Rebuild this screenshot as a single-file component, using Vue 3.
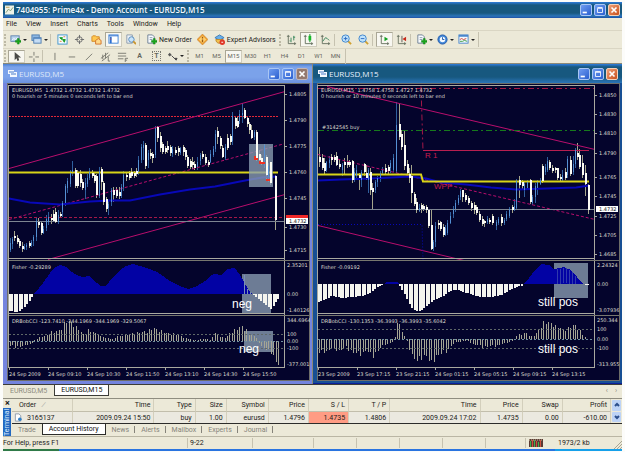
<script setup>
const menus = ['File', 'View', 'Insert', 'Charts', 'Tools', 'Window', 'Help']

const plus = '<path d="M8 5h2v2h2v2h-2v2H8V9H6V7h2z" fill="#18a818" stroke="#0a7a14" stroke-width=".5"/>'
const axes = '<path d="M2.500 1v9.500H11M1 2.500h3M9.500 9v3" fill="none" stroke="#66705f"/>'
const sheet = '<path d="M2 1h5l2 2v7H2z" fill="#f8fbff" stroke="#6b7d92"/><path d="M4 4h3M4 6h3" stroke="#8898aa"/>'

const toolbar = [
  { kind: 'grip' },
  { kind: 'drop', name: 'New chart', art: '<rect x="1" y="2" width="9" height="6" fill="#b9d3ee" stroke="#5f83ae"/><path d="M2 7l2-2 2 1 2-2" stroke="#fff" fill="none"/>' + plus },
  { kind: 'drop', name: 'Profiles', art: '<rect x="1" y="1" width="8" height="6" fill="#8db8e4" stroke="#4f7db0"/><rect x="3" y="4" width="8" height="6" fill="#c5ddf5" stroke="#4f7db0"/><path d="M3 5h8" stroke="#5488c4"/>' },
  { kind: 'sep' },
  { kind: 'icon', name: 'Market watch', art: '<rect x="1" y="1" width="10" height="10" fill="#f4faff" stroke="#3f94cc"/><path d="M3 4h3l-1 2zM6 6l3 0-1 3z" fill="#159a20" stroke="#159a20"/><path d="M7 3h2M3 8h2" stroke="#e08030"/>' },
  { kind: 'icon', name: 'Data window', art: '<circle cx="6" cy="6" r="3" fill="none" stroke="#68696a"/><path d="M6 1v4M6 7v4M1 6h4M7 6h4" stroke="#68696a"/>' },
  { kind: 'icon', name: 'Navigator', art: '<path d="M1 3l1-1h3l1 1h3v5H1z" fill="#ffc850" stroke="#d28a26"/><path d="M5 7l3-2 3 2v4H5z" fill="#ffd98a" stroke="#d2742a"/>' },
  { kind: 'icon', name: 'Terminal', on: true, art: '<rect x="1" y="1" width="10" height="9" fill="#fff" stroke="#3b82d8"/><path d="M1 2h10" stroke="#2d6ed0" stroke-width="1"/><path d="M3 3v7" stroke="#2d6ed0" stroke-width="2"/><path d="M3 5v1" stroke="#f04030"/>' },
  { kind: 'icon', name: 'Strategy tester', art: '<path d="M2 1h6v9H2z" fill="#eef4fa" stroke="#8b9aab"/><circle cx="7" cy="6" r="3" fill="#c8e4fa" stroke="#5588b8"/><path d="M9 8l3 3" stroke="#c89530" stroke-width="2"/>' },
  { kind: 'sep' },
  { kind: 'text', name: 'New Order', art: sheet + plus },
  { kind: 'icon', name: 'MetaEditor', art: '<path d="M6 0l6 6-6 6-6-6z" fill="#f0a030" stroke="#b87020" stroke-width=".5"/><path d="M6 2l4 4-4 4-4-4z" fill="#ffd070"/><path d="M6 3v2M6 6v3" stroke="#9a5a10" stroke-width="1.500"/>' },
  { kind: 'text', name: 'Expert Advisors', art: '<path d="M1 4l5-3 5 3-5 3z" fill="#6ab0e8" stroke="#3a78b8"/><path d="M2 6c0 5 7 6 8 0z" fill="#f0c050" stroke="#c08a28"/><circle cx="9" cy="9" r="3" fill="#e03828"/><path d="M8 9h2" stroke="#fff"/>' },
  { kind: 'grip' },
  { kind: 'icon', name: 'Bar chart', art: axes + '<path d="M5.500 4v5M5 7.500h-1M8.500 2v5M8 3.500h2" stroke="#34865a" fill="none"/>' },
  { kind: 'icon', name: 'Candlesticks', on: true, art: axes + '<path d="M7.500 0v9" stroke="#0b8a1a"/><rect x="6" y="2" width="3" height="5" fill="#19b82a"/>' },
  { kind: 'icon', name: 'Line chart', art: axes + '<path d="M3 8l3-4 2 1 2 2" stroke="#34865a" fill="none"/>' },
  { kind: 'sep' },
  { kind: 'icon', name: 'Zoom in', art: '<path d="M7 7l4 4" stroke="#d0a030" stroke-width="2"/><circle cx="5" cy="5" r="4" fill="#bfe2fb" stroke="#3a82cc"/><path d="M3 5h4M5 3v4" stroke="#2868c0"/>' },
  { kind: 'icon', name: 'Zoom out', art: '<path d="M7 7l4 4" stroke="#d0a030" stroke-width="2"/><circle cx="5" cy="5" r="4" fill="#bfe2fb" stroke="#3a82cc"/><path d="M3 5h4" stroke="#2868c0"/>' },
  { kind: 'sep' },
  { kind: 'icon', name: 'Auto scroll', on: true, art: axes + '<path d="M6 3l4 2.500L6 8z" fill="#12a020"/>' },
  { kind: 'icon', name: 'Chart shift', art: axes + '<path d="M6.500 2v7" stroke="#5a5a5a"/><path d="M11 3L7 5.500 11 8z" fill="#c82818"/>' },
  { kind: 'sep' },
  { kind: 'drop', name: 'Indicators', art: sheet + plus },
  { kind: 'drop', name: 'Periods', art: '<circle cx="6" cy="6" r="5" fill="#3f86d8" stroke="#2058a8"/><circle cx="6" cy="6" r="3" fill="#f2f8ff"/><path d="M6 3.500V6h2" stroke="#2058a8" fill="none"/>' },
  { kind: 'drop', name: 'Templates', art: '<rect x="1" y="1" width="10" height="9" fill="#f4f9ff" stroke="#4a86cc"/><path d="M1 2h10" stroke="#4a86cc" stroke-width="2"/><path d="M2 6l2-1 2 1 3-1" stroke="#d04030" fill="none"/><path d="M2 8l3 0 2-1 3 1" stroke="#3a9a40" fill="none"/>' },
  { kind: 'end' },
]

const g = '#77776f'
const drawing = [
  { kind: 'grip' },
  { kind: 'icon', name: 'Cursor', on: true, art: '<path d="M4 1v9l2-2 1 3 2-1-1-3h3z" fill="#4a4a48"/>' },
  { kind: 'icon', name: 'Crosshair', art: `<path d="M6.500 1v4M6.500 8v4M1 6.500h4M8 6.500h4" stroke="${g}"/>` },
  { kind: 'sep' },
  { kind: 'icon', name: 'Vertical line', art: `<path d="M6.500 2v8" stroke="${g}"/>` },
  { kind: 'icon', name: 'Horizontal line', art: `<path d="M3 6.500h7" stroke="${g}"/>` },
  { kind: 'icon', name: 'Trendline', art: `<path d="M3 10l7-7" stroke="${g}"/>` },
  { kind: 'icon', name: 'Channel', art: `<path d="M1 8l8-6M2 11l9-7M3 4v5M6 2v6M9 6v5M9 11h2" stroke="${g}" fill="none"/>` },
  { kind: 'icon', name: 'Fibonacci', art: `<path d="M1 2.500h9M1 5.500h9M1 8.500h6M9 12V8h3M9 10h2" stroke="${g}" fill="none"/>` },
  { kind: 'icon', name: 'Text', glyph: 'A' },
  { kind: 'icon', name: 'Label', glyph: 'T', boxed: true },
  { kind: 'drop', name: 'Arrows', art: '<path d="M1 4l2-2 2 2-2 2z" fill="#555"/><path d="M8 8h3l-1 2zM5 5l3 3" fill="#444" stroke="#444"/>' },
  { kind: 'grip' },
]
const frames = ['M1', 'M5', 'M15', 'M30', 'H1', 'H4', 'D1', 'W1', 'MN']

/* Each candle: x, high, body top, body bottom, low, direction */
const parse = (s) => s.trim().split(/\s+/).map((t) => {
  const [x, hi, top, bot, lo, up] = t.split(',')
  return { x: +x, hi: +hi, top: +top, bot: +bot, lo: +lo, up: up === 'u' }
})

/* Histogram columns, interpolated between key points */
const columns = (pts, from, to, step) => {
  const out = []
  for (let x = from; x <= to; x += step) {
    const i = Math.max(1, pts.findIndex((p) => p[0] >= x))
    const [x0, y0] = pts[i - 1]
    const [x1, y1] = pts[i]
    const y = y0 + ((y1 - y0) * (Math.min(Math.max(x, x0), x1) - x0)) / (x1 - x0)
    out.push({ x: Math.round(x), y: Math.round(y) })
  }
  return out
}
const wobble = (cols, zero) => cols.map((c, i) => ({ x: c.x, y: Math.round(zero + (c.y - zero) * [1, 0.8, 1.1, 0.9, 1][i % 5]) }))

const STEP = 39 / 16

const charts = [
  {
    title: 'EURUSD,M5', active: false, ox: 7, left: 9, axis: 285, end: 278,
    head: 'EURUSD,M5  1.4732 1.4732 1.4732 1.4732',
    note: '0 hourish or 5 minutes 0 seconds left to bar end',
    candles: parse(`10,238,243,250,252,u 12,237,239,244,249,u 14,231,236,238,241,d 17,235,238,242,244,d 19,239,241,246,248,d 22,242,246,249,252,d 24,244,247,249,250,u 26,243,245,247,250,u 29,241,243,246,248,d 31,240,242,245,247,u 33,235,237,241,246,u 36,218,221,237,241,u 38,218,222,225,228,d 41,221,223,233,235,d 43,226,229,233,234,u 46,215,219,228,231,u 48,212,217,222,225,u 51,214,218,220,224,d 53,210,214,221,222,d 55,208,212,222,223,d 58,210,215,222,224,u 60,212,214,216,218,d 62,201,203,212,217,u 65,184,186,203,206,u 67,178,181,188,193,u 70,170,173,184,187,u 72,161,170,172,176,u 75,168,170,186,188,d 77,170,173,186,188,d 80,170,174,183,187,d 82,179,182,188,190,d 85,178,183,190,199,u 87,174,178,184,187,u 89,168,172,178,180,u 92,170,173,176,178,d 94,173,175,181,183,d 96,174,176,195,198,d 99,167,171,196,198,u 101,167,169,182,190,d 103,181,183,202,205,d 106,197,199,209,212,d 108,201,204,208,215,u 111,188,190,202,206,u 113,187,190,195,202,d 116,187,190,196,198,d 119,187,192,196,199,d 121,184,187,196,198,u 123,171,175,187,191,u 126,172,175,177,181,d 129,171,173,178,180,d 131,168,172,176,178,d 134,171,173,176,178,d 136,168,171,174,177,d 138,156,160,172,175,u 141,144,147,160,163,u 143,141,145,148,160,u 145,143,145,166,169,d 148,150,153,160,168,u 150,149,153,156,159,d 152,152,154,158,163,d 155,126,128,155,158,u 157,126,127,138,142,d 160,132,136,148,152,d 162,142,144,152,154,d 165,146,148,152,154,d 167,141,146,150,153,d 170,145,147,153,156,d 172,146,149,154,157,u 175,147,150,153,155,d 178,146,148,152,156,d 180,147,148,153,155,u 183,145,147,152,156,d 185,148,150,157,160,d 187,155,157,166,168,d 190,159,161,167,169,d 192,157,162,165,169,d 194,161,164,168,170,d 197,157,162,167,170,u 200,153,155,161,165,u 202,151,154,157,159,d 205,154,157,163,165,d 208,160,162,165,167,d 210,150,154,162,163,u 213,146,149,155,157,u 215,130,134,149,152,u 217,127,131,137,144,d 220,136,138,146,149,d 222,145,148,157,158,d 225,144,147,158,160,u 227,134,138,148,150,d 230,134,136,142,145,d 232,112,116,141,145,u 235,116,118,126,129,d 237,117,121,127,128,d 239,110,114,121,124,u 242,103,113,115,123,u 244,108,110,118,119,d 247,116,118,124,127,d 249,122,124,130,134,d 251,125,130,138,139,d 254,130,132,137,140,u 256,130,132,158,161,d 259,150,154,160,163,d 261,155,158,162,165,d 264,144,145,166,168,u 266,155,157,175,180,d 268,163,166,177,182,u 270,162,162,183,185,d 275,175,176,220,230,d`),
    lines: [
      ['9,116 278,116', 'red'], ['9,168 285,91', 'mag'], ['48,259 285,194', 'mag'], ['9,219 285,143', 'mag dash'],
      ['9,172 278,172', 'yellow'], ['9,217 285,217', 'crimson dash'], ['9,221 285,221', 'grey'],
      ['9,198 30,202 60,204 90,201 110,200 130,200 160,194 190,189 215,186 240,181 262,177 277,176', 'blue'],
    ],
    marks: ['255,156 255,159 258,159', '260,161 260,163 265,163', '266,180 270,180'],
    boxes: [[249, 144, 24, 43], [242, 274, 29, 40], [244, 331, 29, 21]],
    big: [['neg', 232, 308], ['neg', 239, 353]],
    tags: [],
    prices: [['1.4805', 94], ['1.4790', 120], ['1.4775', 146], ['1.4760', 172], ['1.4745', 198], ['1.4730', 227], ['1.4715', 250]],
    last: 218, ask: true, zero: 294, cciZero: 341, levels: [334, 348],
    area: '34,294 39,288 43,283 48,276 52,270 56,267 60,265 66,267 72,272 75,274 82,277 89,276 97,283 101,286 106,286 113,277 120,270 126,266 133,264 140,266 150,269 157,272 163,276 170,281 180,286 188,289 197,286 205,281 211,275 215,274 221,275 227,269 235,268 240,275 244,282 248,289 252,294',
    neg: [...columns([[9, 311], [18, 312], [25, 306], [32, 295]], 9, 32, STEP), ...columns([[253, 295], [260, 301], [270, 309], [279, 297]], 253, 279, STEP)],
    cci: wobble([...columns([[9, 346], [20, 347], [27, 345], [33, 342], [36, 338], [45, 336], [52, 332], [58, 331], [62, 326], [67, 320], [73, 323], [77, 328], [83, 334], [88, 330], [95, 333], [105, 338], [112, 339], [118, 336], [128, 334], [135, 333], [145, 331], [155, 328], [165, 333], [175, 334], [185, 338], [195, 340], [205, 339], [210, 340], [215, 333], [220, 336], [225, 338], [230, 332], [238, 328], [242, 326], [245, 329], [250, 334], [256, 337], [259, 344], [265, 349], [270, 352], [273, 356], [276, 363], [279, 366]], 10, 279, STEP)], 341),
    fisher: 'Fisher -0.29289', cciText: 'DRBobCCI -123.7410 -344.1969 -344.1969 -329.5067',
    scale: [['2.35201', 265], ['0.00', 294], ['-1.40126', 310], ['344.6964', 320], ['100', 334], ['0.00', 341], ['-100', 348], ['-377.001', 364]],
    times: ['24 Sep 2009', '24 Sep 09:10', '24 Sep 10:30', '24 Sep 11:50', '24 Sep 13:10', '24 Sep 14:30', '24 Sep 15:50'],
  },
  {
    title: 'EURUSD,M15', active: true, ox: 316, left: 317, axis: 594, end: 588,
    head: 'EURUSD,M15  1.4758 1.4758 1.4727 1.4732',
    note: '0 hourish or 10 minutes 0 seconds left to bar end',
    candles: parse(`318,147,157,162,167,d 321,154,158,168,170,d 323,158,163,171,174,d 325,161,162,170,172,u 328,156,160,163,168,u 330,154,157,160,165,d 333,155,157,160,162,d 335,152,156,165,166,d 338,160,164,167,169,d 341,163,165,170,176,u 343,158,162,165,174,d 346,155,162,165,168,d 348,160,162,165,167,d 351,160,161,180,183,d 353,168,172,180,182,u 355,165,170,176,180,u 358,173,175,178,190,d 360,170,172,180,187,u 363,163,164,172,176,d 365,165,173,178,180,d 367,168,170,180,193,u 369,168,172,190,195,d 371,183,188,192,210,d 374,180,182,190,193,u 376,176,178,182,187,u 379,171,174,178,182,u 381,167,170,173,175,u 384,164,168,172,174,d 387,165,167,171,174,d 389,160,163,168,173,u 392,154,158,170,172,u 395,102,125,171,173,u 398,103,124,137,140,d 400,130,134,147,150,d 403,131,145,166,170,d 406,160,164,173,177,d 408,168,174,178,183,d 410,165,176,193,203,d 413,192,194,204,206,d 415,198,202,210,213,d 418,204,208,211,212,u 420,203,205,209,213,d 422,204,206,209,211,d 425,205,207,210,213,d 427,209,210,226,228,d 430,210,225,249,250,d 432,240,242,248,251,u 434,222,226,242,247,u 437,220,223,225,229,d 439,221,222,229,231,d 442,224,227,235,237,d 444,225,228,235,236,u 446,220,223,233,235,u 449,212,216,223,224,u 452,206,209,214,218,u 454,200,203,209,212,u 457,195,198,203,205,u 459,189,191,197,200,u 461,190,190,197,202,d 464,193,195,200,202,d 467,196,198,203,205,d 470,201,203,208,211,d 473,202,205,210,214,d 475,205,207,213,215,d 478,211,214,220,222,d 481,216,219,224,226,d 483,220,221,223,227,d 486,216,219,222,224,u 488,218,220,222,224,d 491,214,216,223,225,d 495,220,222,226,230,u 497,217,219,223,225,u 500,214,217,223,226,d 503,218,220,223,225,u 505,211,214,219,221,u 508,207,209,216,218,u 511,205,207,210,213,d 513,199,206,210,211,u 515,179,181,208,210,u 518,176,180,185,198,d 521,180,182,186,190,d 523,182,184,190,197,u 526,180,182,188,190,u 529,179,180,202,204,d 531,195,197,203,205,u 534,183,186,197,203,u 536,180,182,188,195,u 539,178,180,184,185,u 541,164,166,181,183,d 544,164,167,172,175,u 546,157,161,170,172,u 548,160,162,168,170,d 551,165,168,171,173,d 554,167,168,170,173,d 556,168,168,178,180,d 559,174,177,179,181,d 561,170,175,180,182,u 564,168,172,178,180,d 566,156,159,175,178,u 569,156,160,174,176,d 572,156,164,172,175,u 574,148,150,164,168,u 576,143,153,157,160,d 578,149,155,167,169,d 581,155,163,175,178,d 584,165,173,184,196,d 587,184,185,210,214,d`),
    lines: [
      ['317,88 594,88', 'crimson dashdot'], ['326,86 594,149', 'mag'], ['317,225 463,260', 'mag'], ['317,154 594,219', 'mag dash'],
      ['317,130 594,130', 'green dashdot'], ['420,86 422,150', 'crimson dashdot'], ['422,150 588,150', 'rose'],
      ['317,180 340,179 370,178 410,176 425,178 440,182 465,184 490,187 515,189 545,188 575,187 588,185', 'blue'],
      ['317,174 420,174 422,181 588,181', 'yellow'], ['317,209 594,209', 'grey'],
      ['317,224 421,224 422,259', 'blue dot'],
    ],
    marks: [],
    boxes: [[553, 263, 34, 35]],
    big: [['still pos', 537, 306], ['still pos', 537, 353]],
    tags: [['R 1', 424, 158], ['WPP', 433, 189]],
    order: '#3142545 buy',
    prices: [['1.4850', 95], ['1.4830', 114], ['1.4810', 133], ['1.4790', 153], ['1.4765', 177], ['1.4745', 196], ['1.4725', 216], ['1.4705', 235], ['1.4685', 254]],
    last: 206, ask: false, zero: 284, cciZero: 339, levels: [329, 348],
    area: '383,284 386,282 396,282 399,284 523,284 528,278 534,270 540,264 548,265 553,269 563,267 570,270 576,277 582,284',
    neg: [...columns([[317, 302], [322, 300], [330, 296], [340, 298], [350, 297], [360, 296], [367, 294], [372, 290], [377, 286], [382, 285]], 317, 382, STEP), ...columns([[398, 286], [404, 296], [410, 308], [416, 312], [424, 307], [432, 300], [440, 297], [448, 291], [455, 290], [465, 293], [473, 296], [480, 297], [490, 297], [500, 295], [508, 290], [515, 287], [522, 285]], 398, 522, STEP), { x: 584, y: 285 }, { x: 586, y: 285 }],
    cci: wobble([...columns([[318, 353], [325, 352], [330, 349], [338, 351], [345, 348], [352, 353], [360, 354], [365, 350], [371, 357], [376, 351], [382, 345], [388, 343], [393, 341], [395, 326], [398, 320], [401, 333], [404, 337], [406, 342], [411, 357], [416, 361], [420, 358], [425, 356], [430, 365], [434, 357], [440, 354], [446, 352], [450, 345], [457, 342], [465, 341], [472, 344], [482, 347], [495, 346], [505, 343], [512, 340], [516, 334], [525, 333], [532, 337], [538, 329], [541, 323], [546, 321], [550, 323], [556, 327], [563, 329], [568, 328], [573, 324], [578, 330], [583, 336], [587, 341]], 318, 587, STEP)], 339),
    fisher: 'Fisher -0.09192', cciText: 'DRBobCCI -130.1353 -36.3993 -36.3993 -35.6042',
    scale: [['2.24324', 265], ['0.00', 284], ['-3.07936', 310], ['250.344', 320], ['100', 329], ['0.00', 339], ['-100', 348], ['-313.955', 364]],
    times: ['23 Sep 2009', '23 Sep 17:15', '23 Sep 21:15', '24 Sep 01:15', '24 Sep 05:15', '24 Sep 09:15', '24 Sep 13:15'],
  },
]

const cols = ['Order', 'Time', 'Type', 'Size', 'Symbol', 'Price', 'S / L', 'T / P', 'Time', 'Price', 'Swap', 'Profit']
const row = ['3165137', '2009.09.24 15:50', 'buy', '1.00', 'eurusd', '1.4796', '1.4735', '1.4806', '2009.09.24 17:02', '1.4735', '0.00', '-610.00']
const widths = [61, 81, 41, 31, 42, 40, 40, 41, 90, 42, 40, 48]
const total = widths.reduce((a, b) => a + b)
const panels = ['Trade', 'Account History', 'News', 'Alerts', 'Mailbox', 'Experts', 'Journal']
</script>

<template>
  <div class="app">
    <header class="title">
      <svg class="logo" viewBox="0 0 10 10"><rect width="10" height="10" fill="#eef2e8" /><path d="M1 8l3-4 2 2 3-4" fill="none" stroke="#7b9a70" /><path d="M1 2h4" stroke="#c0a050" /></svg>
      <h1>7404955: Prime4x - Demo Account - EURUSD,M15</h1>
      <div class="controls">
        <button class="ctl" aria-label="Minimize"><svg viewBox="0 0 12 12"><path d="M2 9h5" stroke="#fff" stroke-width="2" /></svg></button>
        <button class="ctl" aria-label="Restore"><svg viewBox="0 0 12 12"><path d="M3 4h6v5H3zM3 3h6" fill="none" stroke="#fff" /></svg></button>
        <button class="ctl close" aria-label="Close"><svg viewBox="0 0 12 12"><path d="M3 3l6 6M9 3l-6 6" stroke="#fff" stroke-width="2" /></svg></button>
      </div>
    </header>

    <nav class="menu">
      <button v-for="m in menus" :key="m">{{ m }}</button>
    </nav>

    <div class="bar tall">
      <template v-for="(t, i) in toolbar" :key="i">
        <span v-if="['grip', 'sep', 'end'].includes(t.kind)" :class="t.kind"></span>
        <button v-else class="tool" :class="[t.kind, { on: t.on }]" :aria-label="t.name">
          <svg class="ico" viewBox="0 0 12 12" v-html="t.art"></svg>
          <span v-if="t.kind === 'text'">{{ t.name }}</span>
          <i v-if="t.kind === 'drop'" class="caret"></i>
        </button>
      </template>
    </div>

    <div class="bar">
      <template v-for="(t, i) in drawing" :key="i">
        <span v-if="['grip', 'sep'].includes(t.kind)" :class="t.kind"></span>
        <button v-else class="tool" :class="[t.kind, { on: t.on }]" :aria-label="t.name">
          <b v-if="t.glyph" :class="{ boxed: t.boxed }">{{ t.glyph }}</b>
          <svg v-else class="ico" viewBox="0 0 12 12" v-html="t.art"></svg>
          <i v-if="t.kind === 'drop'" class="caret"></i>
        </button>
      </template>
      <button v-for="f in frames" :key="f" class="tool frame" :class="{ on: f === 'M15' }">{{ f }}</button>
      <span class="end"></span>
    </div>

    <main class="mdi">
      <section v-for="c in charts" :key="c.title" class="win" :class="{ active: c.active }">
        <header class="wintitle">
          <svg class="winicon" viewBox="0 0 9 9"><path d="M0 1h6v2h3v5H2V5H0z" fill="#f4f8ff" /><path d="M1 3h5M3 5h5" stroke="#4a7cc8" /></svg>
          <h2>{{ c.title }}</h2>
          <div class="controls">
            <button class="ctl" aria-label="Minimize"><svg viewBox="0 0 12 12"><path d="M2 9h5" stroke="#fff" stroke-width="2" /></svg></button>
            <button class="ctl" aria-label="Maximize"><svg viewBox="0 0 12 12"><path d="M3 3h6v6H3zM3 4h6" fill="none" stroke="#fff" /></svg></button>
            <button class="ctl close" aria-label="Close"><svg viewBox="0 0 12 12"><path d="M3 3l6 6M9 3l-6 6" stroke="#fff" stroke-width="2" /></svg></button>
          </div>
        </header>
        <svg class="chart" :viewBox="`${c.ox} 83 303 298`" role="img" :aria-label="c.title">
          <rect :x="c.ox" y="83" width="303" height="298" fill="#6d6d68" />
          <rect :x="c.ox + 1" y="84" width="301" height="296" fill="#04042c" />
          <g class="crisp">
            <rect v-for="(k, i) in c.candles" :key="'w' + i" :x="k.x" :y="k.hi" width="1" :height="k.lo - k.hi" :fill="k.up ? '#2f5f9c' : '#a6a68c'" />
          </g>
          <g class="lines">
            <polyline v-for="(l, i) in c.lines" :key="i" :points="l[0]" :class="l[1]" transform="translate(0 .5)" />
          </g>
          <rect v-for="(b, i) in c.boxes" :key="'b' + i" :x="b[0]" :y="b[1]" :width="b[2]" :height="b[3]" fill="#8c9fb4" fill-opacity=".78" />
          <g class="crisp">
            <rect v-for="(k, i) in c.candles" :key="i" :x="k.x" :y="k.top" :width="k.up ? 1 : 2" :height="Math.max(1, k.bot - k.top)" :fill="k.up ? '#5590d4' : '#fbfbf4'" />
            <polyline v-for="m in c.marks" :key="m" :points="m" fill="none" stroke="#f03020" stroke-width="2" />
            <polygon :points="c.area" fill="#0202a4" />
            <template v-if="c.active"><path d="M556 269v15M559 269v15M562 268v15M565 268v15M568 270v14M571 272v12M574 276v8" stroke="#5060b4" stroke-opacity=".6" /></template>
            <template v-else><path d="M244 275v19M247 289v5M250 292v2" stroke="#7a8fb8" /></template>
            <rect v-for="(n, i) in c.neg" :key="'n' + i" :x="n.x" :y="c.zero" width="2" :height="Math.max(1, n.y - c.zero)" fill="#f4f4ee" />
            <rect v-for="(n, i) in c.cci" :key="'c' + i" :x="n.x" :y="Math.min(n.y, c.cciZero)" width="1" :height="Math.max(1, Math.abs(n.y - c.cciZero))" fill="#a5a594" />
            <line v-for="y in c.levels" :key="y" :x1="c.left" :x2="c.axis" :y1="y" :y2="y" class="level" />
            <line :x1="c.left" :x2="c.axis" :y1="c.cciZero" :y2="c.cciZero" stroke="#6f8f9e" stroke-dasharray="2 2" />
            <path :d="`M${c.left} 86H${c.axis}V368H${c.left}z M${c.left} 259H${c.axis} M${c.left} 314H${c.axis}`" fill="none" stroke="#a9a9a0" transform="translate(-.5 -.5)" />
            <path :d="`M${c.left} 261H${c.ox + 302} M${c.left} 316H${c.ox + 302}`" stroke="#77776f" transform="translate(0 -.5)" />
          </g>
          <g class="label">
            <text :x="c.left + 3" y="92">{{ c.head }}</text>
            <text :x="c.left + 3" y="98">{{ c.note }}</text>
            <text v-if="c.order" :x="c.left + 4" y="129">{{ c.order }}</text>
            <text :x="c.left + 3" y="269">{{ c.fisher }}</text>
            <text :x="c.left + 3" y="323">{{ c.cciText }}</text>
            <g v-for="p in c.prices" :key="p[0]">
              <rect :x="c.axis" :y="p[1]" width="2" height="1" fill="#a9a9a0" />
              <text :x="c.axis + 4" :y="p[1] + 2">{{ p[0] }}</text>
            </g>
            <text v-for="(s, i) in c.scale" :key="i" :x="c.axis + 2" :y="s[1] + 2">{{ s[0] }}</text>
            <g v-for="(t, i) in c.times" :key="t">
              <rect :x="c.left + i * 39" y="368" width="1" height="2" fill="#a9a9a0" />
              <text :x="c.left + i * 39" y="376">{{ t }}</text>
            </g>
          </g>
          <rect v-if="c.ask" :x="c.axis + 1" :y="c.last - 3" width="22" height="3" fill="#f02828" />
          <rect :x="c.axis + 1" :y="c.last" width="22" height="6" fill="#fff" />
          <text class="last" :x="c.axis + 4" :y="c.last + 5">1.4732</text>
          <text v-for="t in c.tags" :key="t[0]" class="tag" :x="t[1]" :y="t[2]">{{ t[0] }}</text>
          <text v-for="(t, i) in c.big" :key="i" class="big" :x="t[1]" :y="t[2]">{{ t[0] }}</text>
        </svg>
      </section>
    </main>

    <nav class="charttabs">
      <button>EURUSD,M5</button>
      <button class="sel">EURUSD,M15</button>
      <span class="arrows"><button aria-label="Previous">‹</button><button aria-label="Next">›</button></span>
    </nav>

    <section class="terminal">
      <aside class="side">
        <button aria-label="Close terminal">×</button>
        <span>Terminal</span>
      </aside>
      <div class="body">
        <div class="grid">
          <table>
            <colgroup><col v-for="(w, i) in widths" :key="i" :style="{ width: (w / total) * 100 + '%' }" /></colgroup>
            <thead><tr><th v-for="(h, i) in cols" :key="i">{{ h }}<em v-if="!i">∕</em></th></tr></thead>
            <tbody>
              <tr>
                <td v-for="(v, i) in row" :key="i" :class="{ hit: i === 6 }">
                  <span v-if="!i" class="order"><svg class="doc" viewBox="0 0 9 10"><path d="M1 1h4l2 2v6H1z" fill="#fff" stroke="#8a97a8" /><circle cx="6" cy="7" r="2" fill="#2f7fc8" /></svg>{{ v }}</span>
                  <template v-else>{{ v }}</template>
                </td>
              </tr>
            </tbody>
          </table>
          <div class="scroll">
            <button aria-label="Scroll up"><svg viewBox="0 0 8 8"><path d="M2 5l2-2 2 2" fill="none" stroke="#2c4f8c" stroke-width="2" /></svg></button>
            <button aria-label="Scroll down"><svg viewBox="0 0 8 8"><path d="M2 3l2 2 2-2" fill="none" stroke="#2c4f8c" stroke-width="2" /></svg></button>
          </div>
        </div>
        <nav class="panels">
          <button v-for="p in panels" :key="p" :class="{ sel: p === 'Account History' }">{{ p }}</button>
        </nav>
      </div>
    </section>

    <footer class="status">
      <span class="help">For Help, press F1</span>
      <span class="profile">9-22</span>
      <span></span><span></span><span></span><span></span><span></span><span></span>
      <span class="traffic">
        <svg viewBox="0 0 14 8"><rect width="14" height="8" fill="#5b3a34" /><path d="M1.500 2v6M5.500 1v7M9.500 3v5" stroke="#3fae4a" /><path d="M3.500 1v7M7.500 2v6M11.500 1v7" stroke="#d0503c" /><path d="M0 1h14" stroke="#c8c0a0" stroke-dasharray="1 1" /></svg>
        1973/2 kb
      </span>
      <svg class="resize" viewBox="0 0 9 9"><path d="M1 9l8-8M4 9l5-5M7 9l2-2" stroke="#a8a592" /></svg>
    </footer>
    <div class="taskbar"><i class="start"></i><i class="tray"></i></div>
  </div>
</template>

<style>
body { background: #fcfcfa; }
</style>

<style scoped>
.app { margin: 2px 3px 0; background: #ece9d8; font-family: Roboto, "Liberation Sans", Arial, sans-serif; font-size: 7px; line-height: 8px; color: #1c1c1a; }
.app * { box-sizing: border-box; }
button { border: 0; padding: 0; margin: 0; background: none; font: inherit; color: inherit; }
h1, h2 { margin: 0; font-family: "Open Sans", "Noto Sans", sans-serif; font-size: 8px; font-weight: 600; line-height: 14px; flex: 1; white-space: nowrap; }
svg { display: block; }

.title { display: flex; align-items: center; height: 16px; padding: 0 2px; gap: 2px; background: linear-gradient(#2f7ddc 0, #17587f 3px, #17587f 11px, #2a74b8 14px, #1c50a8 16px); color: #f4f8ff; }
.logo { width: 9px; height: 10px; }
.controls { display: flex; gap: 2px; }
.ctl { width: 12px; height: 12px; border: 1px solid #a9c6f4; border-radius: 2px; background: linear-gradient(135deg, #6f9cf0, #2a5fd0); }
.ctl.close { background: linear-gradient(135deg, #f0a078, #c8501c); border-color: #f4d0b8; }
.ctl svg { width: 100%; height: 100%; }

.menu { display: flex; height: 12px; padding: 0 3px; gap: 9px; align-items: center; }
.bar { display: flex; align-items: center; height: 15px; border-top: 1px solid #dad6c4; color: #66665e; }
.bar.tall { height: 18px; color: #1c1c1a; }
.grip { width: 3px; height: 12px; margin: 0 1px; border-left: 2px dotted #bdb9a6; }
.sep { width: 4px; height: 12px; border-left: 1px solid #c6c2b0; }
.end { width: 2px; height: 15px; border-right: 1px solid #c6c2b0; }
.tool { display: flex; align-items: center; justify-content: center; flex: none; width: 17px; height: 15px; font-size: 7px; }
.tool.drop { width: 21px; gap: 2px; }
.tool.text { width: auto; gap: 2px; padding: 0 2px 0 3px; }
.tool.on { background: #f8f7f1; border: 1px solid #cfccbc; border-top-color: #a9a695; border-left-color: #a9a695; }
.bar:not(.tall) .tool { height: 13px; }
.tool.frame { font-size: 6px; }
.ico { width: 11px; height: 11px; flex: none; }
.caret { border: 2px solid transparent; border-top-color: #222; border-bottom: 0; }
.boxed { width: 9px; border: 1px dotted #77776f; }

.mdi { display: flex; gap: 1px; border-top: 1px solid #8a8878; background: #8a8878; }
.win { flex: 1; min-width: 0; padding: 0 2px 3px 4px; background: #7484de; }
.win.active { background: #174f94; border-bottom: 1px solid #0a1f9c; }
.wintitle { display: flex; align-items: center; height: 19px; gap: 2px; margin: 0 -2px 0 -4px; padding: 0 4px 0 5px; background: linear-gradient(#4a7fd0 0, #7ba2ea 3px, #7ba2ea 13px, #6c92e0 19px); color: #dfe7f8; }
.active .wintitle { background: linear-gradient(#2f7ddc 0, #17587f 3px, #17587f 13px, #2a74b8 19px); color: #e8f2ff; }
.wintitle h2 { font-weight: 400; }
.winicon { width: 9px; height: 9px; }
.win:not(.active) .close { background: #94796e; border-color: #c3b6b8; }
.chart { width: 100%; height: auto; }
.active .chart { margin-bottom: -1px; }
.crisp { shape-rendering: crispEdges; }
.lines polyline { fill: none; stroke-width: 1; }
.lines .red { stroke: #e02838; stroke-dasharray: 2 1; }
.lines .mag { stroke: #b80e6c; }
.lines .rose { stroke: #b81e50; }
.lines .crimson { stroke: #a41848; }
.lines .yellow { stroke: #d8d418; stroke-width: 2; }
.lines .grey { stroke: #7d8592; }
.lines .blue { stroke: #0808b8; stroke-width: 2; }
.lines .green { stroke: #167a1c; }
.lines .dash { stroke-dasharray: 3 2; }
.lines .dot { stroke-width: 1; stroke-dasharray: 1 2; }
.lines .dashdot { stroke-dasharray: 6 3 2 3; }
.level { stroke: #5f6868; stroke-dasharray: 2 2; }
.label { fill: #deded2; font-family: "DejaVu Sans", sans-serif; font-size: 5px; }
.label text { white-space: pre; }
.last { fill: #111; font-family: "DejaVu Sans", sans-serif; font-size: 5px; }
.tag { fill: #c81c50; font-family: "Liberation Sans", sans-serif; font-size: 8px; }
.big { fill: #fff; font-family: "Liberation Sans", sans-serif; font-size: 12px; }

.charttabs { display: flex; height: 14px; padding-bottom: 2px; border-top: 1px solid #3c3c38; color: #8d8b7e; }
.charttabs > button { padding: 0 7px; }
.charttabs .sel { background: #fff; color: #111; border: 1px solid #3c3c38; border-top: 0; padding: 0 6px; }
.arrows { display: flex; gap: 7px; margin-left: auto; padding-right: 5px; }

.terminal { display: flex; border-top: 1px solid #8f8d80; }
.side { width: 9px; display: flex; flex-direction: column; color: #222; }
.side button { height: 9px; font-size: 9px; line-height: 9px; font-weight: bold; }
.side span { flex: 1; width: 8px; writing-mode: vertical-rl; transform: rotate(180deg); background: #2268c0; color: #dcecff; font-size: 7px; line-height: 8px; text-align: center; white-space: nowrap; }
.body { flex: 1; min-width: 0; }
.grid { display: flex; border-bottom: 1px solid #2c2c2a; }
table { flex: 1; border-collapse: separate; border-spacing: 0; table-layout: fixed; min-width: 0; }
th, td { padding: 0 3px 0 0; height: 12px; font-weight: normal; text-align: right; white-space: nowrap; border-right: 1px solid #d3cfbc; }
th { border-bottom: 1px solid #c2beac; height: 13px; }
td { height: 11px; background: #ebe9e0; }
th:first-child { text-align: left; padding-left: 7px; }
td:first-child { text-align: left; padding-left: 2px; }
td.hit { background: #ff9c84; }
em { margin-left: 7px; color: #999; }
.order { display: flex; align-items: center; gap: 4px; }
.doc { width: 9px; height: 9px; }
.scroll { width: 11px; display: flex; flex-direction: column; gap: 1px; padding: 1px; }
.scroll button { flex: 1; background: #bdd3f6; border-radius: 1px; display: flex; align-items: center; justify-content: center; }
.scroll svg { width: 8px; height: 8px; }
.panels { display: flex; height: 12px; align-items: flex-start; color: #85837a; }
.panels button { height: 11px; padding: 0 6px; position: relative; }
.panels button:nth-child(n + 3)::after { content: ""; position: absolute; right: 0; top: 2px; height: 7px; border-right: 1px solid #85837a; }
.panels .sel { background: #fff; color: #111; border: 1px solid #2c2c2a; border-top: 0; }

.status { display: flex; align-items: center; height: 13px; border-top: 1px solid #bab6a4; }
.status span { width: 43px; height: 10px; line-height: 10px; border-left: 1px solid #c6c2b0; }
.status .help { width: 184px; border-left: 0; }
.status .profile { width: 65px; padding-left: 2px; }
.status span:nth-child(3) { width: 61px; }
.status span:nth-child(8) { width: 40px; }
.status .traffic { display: flex; align-items: center; gap: 15px; flex: 1; width: auto; padding-left: 3px; white-space: nowrap; border-left: 1px solid #c6c2b0; }
.traffic svg { width: 14px; height: 8px; }
.resize { width: 9px; height: 9px; align-self: flex-end; }
.taskbar { display: flex; height: 2px; background: #2a74e0; }
.start { width: 56px; background: #2f7a48; }
.tray { width: 67px; margin-left: auto; background: #16a0ea; }
</style>
